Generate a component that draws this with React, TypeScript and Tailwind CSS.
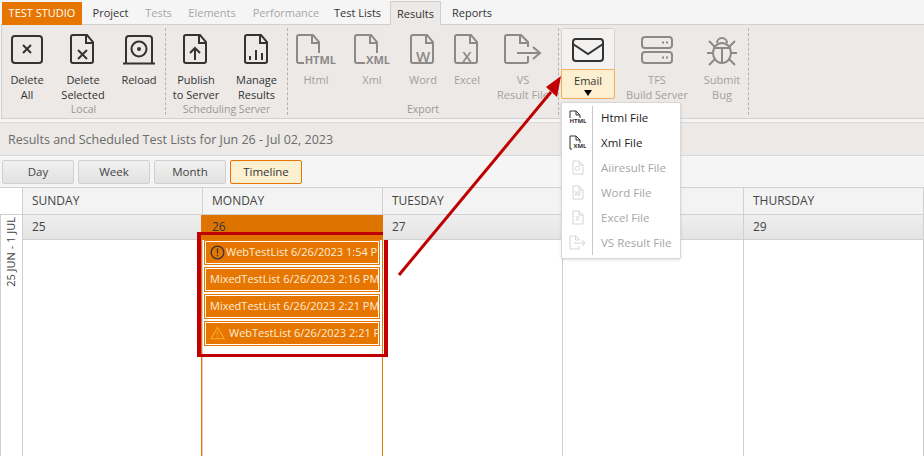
import type { ReactNode } from "react";

const font = "font-['Open_Sans','Noto_Sans',sans-serif]";

function FileShape({ children }: { children?: ReactNode }) {
  return (
    <g>
      <path d="M3 2h14l6 7v19a2 2 0 0 1-2 2H3a2 2 0 0 1-2-2V4a2 2 0 0 1 2-2Z" />
      <path d="M16 2v8h7" />
      {children}
    </g>
  );
}

function Icon({ children, w = 34, h = 34 }: { children: ReactNode; w?: number; h?: number }) {
  return (
    <svg width={w} height={h} viewBox={`0 0 ${w} ${h}`} fill="none" stroke="currentColor" strokeWidth="2">
      {children}
    </svg>
  );
}

function RibbonButton({
  icon,
  lines,
  width,
  disabled,
}: {
  icon: ReactNode;
  lines: string[];
  width: string;
  disabled?: boolean;
}) {
  return (
    <div className={`flex shrink-0 flex-col items-center ${width} ${disabled ? "text-[#8c8a88]" : "text-[#333]"}`}>
      <div className="mt-[3px] flex h-[38px] items-center justify-center">{icon}</div>
      <div className={`mt-[3px] text-center text-[11px] leading-[15px] ${disabled ? "text-[#a3a19f]" : "text-[#333]"}`}>
        {lines.map((l) => (
          <div key={l} className="whitespace-nowrap">{l}</div>
        ))}
      </div>
    </div>
  );
}

function RibbonGroup({ label, children, width }: { label: string; children: ReactNode; width: string }) {
  return (
    <div className={`flex h-full shrink-0 flex-col border-r border-dashed border-[#b5b3b0] ${width}`}>
      <div className="flex flex-1 items-start">{children}</div>
      <div className="h-[12px] text-center text-[10.5px] leading-[12px] text-[#9a9896]">{label}</div>
    </div>
  );
}

function Tabs() {
  const tabs: { name: string; cls: string }[] = [
    { name: "Project", cls: "w-[53px] text-[#333]" },
    { name: "Tests", cls: "w-[43px] text-[#a6a6a6]" },
    { name: "Elements", cls: "w-[64px] text-[#a6a6a6]" },
    { name: "Performance", cls: "w-[84px] text-[#a6a6a6]" },
    { name: "Test Lists", cls: "w-[59px] text-[#333]" },
  ];
  return (
    <div className="flex h-[24px] items-start bg-[#f5f5f5] pl-[2px]">
      <div className="relative z-10 mt-[2px] flex h-[23px] w-[80px] items-center justify-center bg-[#e77600] text-[11px] text-white">TEST STUDIO</div>
      <div className="w-[2px]" />
      {tabs.map((t) => (
        <div key={t.name} className={`flex h-[25px] items-center justify-center pt-[2px] text-[11px] ${t.cls}`}>{t.name}</div>
      ))}
      <div className="w-[3px]" />
      <div className="relative z-10 mt-[1px] flex h-[24px] w-[51px] items-center justify-center border border-b-0 border-[#cfcfcf] bg-[#ece9e6] pt-[1px] text-[11px] text-[#333]">Results</div>
      <div className="flex h-[25px] w-[62px] items-center justify-center pt-[2px] text-[11px] text-[#333]">Reports</div>
    </div>
  );
}

function Ribbon() {
  return (
    <div className="ml-[1px] flex h-[95px] border border-r-0 border-[#d0d0d0] bg-[#ece9e6] py-[3px]">
      <RibbonGroup label="Local" width="w-[164px]">
        <RibbonButton width="w-[50px]" lines={["Delete", "All"]} icon={
          <Icon w={34} h={34}><rect x="2" y="3" width="30" height="27" rx="3" /><path d="m13 12 8 8m0-8-8 8" /></Icon>
        } />
        <RibbonButton width="w-[62px]" lines={["Delete", "Selected"]} icon={
          <Icon w={26} h={34}><FileShape><path d="m8 17 9 9m0-9-9 9" /></FileShape></Icon>
        } />
        <RibbonButton width="w-[50px]" lines={["Reload"]} icon={
          <Icon w={34} h={34}><path d="M4 30V6a3 3 0 0 1 3-3h20a3 3 0 0 1 3 3v24M1 30.500h32" /><circle cx="17" cy="16" r="7.500" /><circle cx="17" cy="16" r="1" fill="currentColor" /></Icon>
        } />
      </RibbonGroup>
      <RibbonGroup label="Scheduling Server" width="w-[122px]">
        <RibbonButton width="w-[60px]" lines={["Publish", "to Server"]} icon={
          <Icon w={26} h={34}><FileShape><path d="M12 27V15m-5 5 5-5 5 5" /></FileShape></Icon>
        } />
        <RibbonButton width="w-[61px]" lines={["Manage", "Results"]} icon={
          <Icon w={26} h={34}><FileShape><path d="M6 27v-4m6 4v-10m6 10v-7" /></FileShape></Icon>
        } />
      </RibbonGroup>
      <RibbonGroup label="Export" width="w-[271px]">
        <RibbonButton width="w-[56px]" disabled lines={["Html"]} icon={
          <div className="relative h-[34px] w-[40px]">
            <Icon w={26} h={34}><FileShape /></Icon>
            <span className="absolute bottom-[1px] right-0 bg-[#ece9e6] pl-[1px] text-[11px] font-bold leading-[13px] text-[#8c8a88]">HTML</span>
          </div>
        } />
        <RibbonButton width="w-[56px]" disabled lines={["Xml"]} icon={
          <div className="relative h-[34px] w-[36px]">
            <Icon w={26} h={34}><FileShape /></Icon>
            <span className="absolute bottom-[1px] right-0 bg-[#ece9e6] pl-[1px] text-[11px] font-bold leading-[13px] text-[#8c8a88]">XML</span>
          </div>
        } />
        <RibbonButton width="w-[46px]" disabled lines={["Word"]} icon={
          <div className="relative h-[34px] w-[26px]">
            <Icon w={26} h={34}><FileShape /></Icon>
            <span className="absolute inset-x-0 bottom-[3px] text-center text-[15px] font-semibold leading-[16px] text-[#8c8a88]">W</span>
          </div>
        } />
        <RibbonButton width="w-[42px]" disabled lines={["Excel"]} icon={
          <div className="relative h-[34px] w-[26px]">
            <Icon w={26} h={34}><FileShape /></Icon>
            <span className="absolute inset-x-0 bottom-[3px] text-center text-[15px] font-semibold leading-[16px] text-[#8c8a88]">X</span>
          </div>
        } />
        <RibbonButton width="w-[70px]" disabled lines={["VS", "Result File"]} icon={
          <Icon w={38} h={34}><path d="M24 14V9l-7-7H3a2 2 0 0 0-2 2v24a2 2 0 0 0 2 2h19a2 2 0 0 0 2-2v-5" /><path d="M16 2v8h8M13 20h23m-7-6 7 6-7 6" /></Icon>
        } />
      </RibbonGroup>
      <div className="flex h-full w-[190px] shrink-0 border-r border-dashed border-[#b5b3b0] pl-[2px]">
        <div className="flex h-[71px] w-[54px] shrink-0 flex-col rounded-[2px] border border-[#d4d2d0]">
          <div className="flex h-[41px] items-center justify-center bg-[#f3f2f1] text-[#333]">
            <Icon w={34} h={26}><rect x="2" y="2" width="30" height="22" rx="3" /><path d="m2 7 15 10L32 7" /></Icon>
          </div>
          <div className="-m-px flex flex-1 flex-col items-center rounded-b-[2px] border border-[#f0ae62] bg-[#fdf0d0] text-[11px] leading-[14px] text-[#333]">
            <span className="mt-[4px]">Email</span>
            <span className="mt-[2px] h-0 w-0 border-x-[4px] border-t-[6px] border-x-transparent border-t-black" />
          </div>
        </div>
        <RibbonButton width="w-[84px]" disabled lines={["TFS", "Build Server"]} icon={
          <Icon w={34} h={30}><rect x="2" y="2" width="30" height="11" rx="3" /><rect x="2" y="17" width="30" height="11" rx="3" /><path d="M22 7.500h2m2 0h2M22 22.500h2m2 0h2" /></Icon>
        } />
        <RibbonButton width="w-[46px]" disabled lines={["Submit", "Bug"]} icon={
          <Icon w={32} h={32}><ellipse cx="16" cy="19" rx="9" ry="10" /><path d="M7 14h18M16 14v14M11 9a5 5 0 0 1 10 0M3 7l6 6M29 7l-6 6M1 19h6M31 19h-6M3 31l6-6M29 31l-6-6" /></Icon>
        } />
      </div>
    </div>
  );
}

function Filters() {
  const items = ["Day", "Week", "Month"];
  return (
    <div className="flex h-[31px] items-center gap-[4px] bg-[#f5f5f5] pl-[2px] pt-[1px]">
      {items.map((i) => (
        <div key={i} className="flex h-[24px] w-[72px] items-center justify-center rounded-[2px] border border-[#d0d0d0] bg-gradient-to-b from-[#f0f0f0] to-[#e2e2e2] text-[11.5px] text-[#444]">{i}</div>
      ))}
      <div className="flex h-[24px] w-[72px] items-center justify-center rounded-[2px] border border-[#e77600] bg-[#fdf0d0] text-[11.5px] text-[#333]">Timeline</div>
    </div>
  );
}

function EventCard({ text, icon }: { text: string; icon?: ReactNode }) {
  return (
    <div className="h-[25px] border border-[#e77600]">
      <div className="flex h-full items-center overflow-hidden whitespace-nowrap border border-white bg-[#e77600] pb-[1px] pl-[4px] text-[11px] text-[#fdeeda]">
        {icon}
        {text}
      </div>
    </div>
  );
}

function Calendar() {
  const days: { name: string; date: string; w: string }[] = [
    { name: "SUNDAY", date: "25", w: "w-[180px]" },
    { name: "MONDAY", date: "26", w: "w-[180px]" },
    { name: "TUESDAY", date: "27", w: "w-[180px]" },
    { name: "WEDNESDAY", date: "28", w: "w-[181px]" },
    { name: "THURSDAY", date: "29", w: "flex-1" },
  ];
  return (
    <div className="flex flex-1 flex-col border-t border-[#d0d0d0] bg-white">
      <div className="flex h-[26px] bg-[#f3f3f3]">
        <div className="w-[23px] shrink-0 border-r border-[#d0d0d0] bg-white" />
        {days.map((d) => (
          <div key={d.name} className={`flex items-center border-r border-[#d0d0d0] pl-[9px] text-[12px] text-[#444] ${d.w}`}>{d.name}</div>
        ))}
      </div>
      <div className="flex flex-1 border-t border-[#d0d0d0]">
        <div className="flex w-[23px] shrink-0 justify-center border-x border-[#d0d0d0] pt-[2px]">
          <span className="h-fit rotate-180 whitespace-nowrap text-[11px] text-[#444] [writing-mode:vertical-rl]">25 JUN - 1 JUL</span>
        </div>
        {days.map((d) => {
          const monday = d.date === "26";
          return (
            <div key={d.date} className={`relative flex flex-col border-r ${d.w} ${monday ? "border-[#e77600]" : "border-[#d0d0d0]"}`}>
              <div className={`flex h-[25px] shrink-0 items-center border-b pl-[9px] text-[12px] ${monday ? "relative -ml-[2px] border-[#df7300] bg-[#df7300] pl-[11px] text-[#333]" : "border-[#d0d0d0] bg-gradient-to-b from-[#efefef] to-[#e4e4e4] text-[#444]"}`}>{d.date}</div>
              {monday && (
                <>
                  <div className="absolute -left-[2px] bottom-0 top-0 w-px bg-[#e77600]" />
                  <div className="relative flex flex-col gap-[2px] pl-[1px] pr-[2px]">
                    <EventCard text="WebTestList 6/26/2023 1:54 PM" icon={
                      <svg width="15" height="15" viewBox="0 0 15 15" className="mr-[1px] shrink-0" fill="none" stroke="#333" strokeWidth="1.300"><circle cx="7.500" cy="7.500" r="6.300" /><path d="M7.500 3.500v5M7.500 10v1.300" /></svg>
                    } />
                    <EventCard text="MixedTestList 6/26/2023 2:16 PM" />
                    <EventCard text="MixedTestList 6/26/2023 2:21 PM" />
                    <EventCard text="WebTestList 6/26/2023 2:21 PM" icon={
                      <svg width="15" height="14" viewBox="0 0 16 14" className="mr-[4px] shrink-0" fill="none" stroke="#f5a623" strokeWidth="1.200"><path d="M8 1 15 13H1ZM8 5v4M8 10.500v1" /></svg>
                    } />
                    <div className="absolute -left-[6px] -top-[8px] h-[125px] w-[191px] border-x-[4px] border-y-[3px] border-[#c00000]" />
                  </div>
                </>
              )}
            </div>
          );
        })}
      </div>
    </div>
  );
}

function MenuIcon({ tag, on }: { tag: string; on: boolean }) {
  const stroke = on ? "#333" : "#d4d4d4";
  if (tag === "VS") {
    return (
      <svg width="17" height="15" viewBox="0 0 17 15" fill="none" stroke={stroke} strokeWidth="1">
        <path d="M10 5V4L7 1H1v13h9v-3M6.500 1v4H10M5 8h11m-3-3 3 3-3 3" />
      </svg>
    );
  }
  return (
    <div className={`relative h-[15px] ${on ? "w-[18px]" : "w-[12px]"}`}>
      <svg width="12" height="15" viewBox="0 0 12 15" fill="none" stroke={stroke} strokeWidth="1">
        <path d="M1 1h6l4 4v9H1zM7 1v4h4" />
      </svg>
      {on ? (
        <span className="absolute bottom-0 right-0 bg-white pl-px text-[6px] font-bold leading-[7px] text-[#333]">{tag}</span>
      ) : (
        <span className="absolute inset-x-0 bottom-[2px] text-center text-[7px] leading-[8px] text-[#c8c8c8]">{tag}</span>
      )}
    </div>
  );
}

function EmailMenu() {
  const items: { name: string; on: boolean; tag: string }[] = [
    { name: "Html File", on: true, tag: "HTML" },
    { name: "Xml File", on: true, tag: "XML" },
    { name: "Aiiresult File", on: false, tag: "O" },
    { name: "Word File", on: false, tag: "W" },
    { name: "Excel File", on: false, tag: "X" },
    { name: "VS Result File", on: false, tag: "VS" },
  ];
  return (
    <div className="absolute left-[561px] top-[102px] z-10 w-[120px] rounded-[2px] border border-[#d8d8d8] bg-white pb-[3px] pt-[2px] shadow-sm">
      <div className="absolute bottom-[3px] left-[30px] top-[3px] w-px bg-[#c8c8c8]" />
      {items.map((it) => (
        <div key={it.name} className={`flex h-[25px] items-center text-[11.5px] ${it.on ? "text-[#222]" : "text-[#a6a6a6]"}`}>
          <div className="flex w-[31px] justify-center">
            <MenuIcon tag={it.tag} on={it.on} />
          </div>
          <span className="pl-[8px]">{it.name}</span>
        </div>
      ))}
    </div>
  );
}

function Arrow() {
  return (
    <svg className="pointer-events-none absolute inset-0 z-20" width="924" height="456" fill="none">
      <path d="M399 275 551 92" stroke="#c00000" strokeWidth="3" />
      <path d="M561 76 546 87l11 10Z" fill="#c00000" />
    </svg>
  );
}

export default function App() {
  return (
    <div className={`relative flex h-[456px] w-[924px] flex-col overflow-hidden bg-[#f5f5f5] ${font}`}>
      <Tabs />
      <Ribbon />
      <div className="mt-[3px] flex h-[34px] shrink-0 items-center border-y border-[#d8d8d8] bg-[#ece9e6] pl-[8px] pt-[3px] text-[12.500px] text-[#6b6b6b]">
        Results and Scheduled Test Lists for Jun 26 - Jul 02, 2023
      </div>
      <Filters />
      <Calendar />
      <EmailMenu />
      <Arrow />
    </div>
  );
}
